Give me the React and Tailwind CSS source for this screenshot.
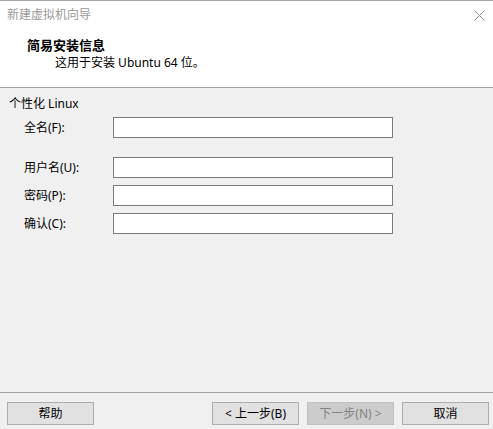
import React from "react";

const font = { fontFamily: '"Segoe UI", "Noto Sans", "Noto Sans CJK SC", sans-serif' };

const Field = ({ label, className = "" }) => (
  <div className={"flex items-center h-[21px] " + className}>
    <span className="w-[113px] pl-[24px] text-[12px] text-black">{label}</span>
    <input
      type="text"
      className="w-[280px] h-[21px] bg-white border border-[#7a7a7a] outline-none"
    />
  </div>
);

const Btn = ({ children, disabled, className = "" }) => (
  <button
    className={
      "w-[87px] h-[23px] border text-[12px] leading-none " +
      (disabled
        ? "bg-[#cccccc] border-[#bfbfbf] text-[#838383] "
        : "bg-[#e1e1e1] border-[#adadad] text-black ") +
      className
    }
  >
    {children}
  </button>
);

export default function App() {
  return (
    <div
      className="w-[493px] h-[429px] flex flex-col border-t border-[#a6a6a6] bg-[#f0f0f0] select-none"
      style={font}
    >
      {/* header */}
      <div className="h-[87px] bg-white border-b border-[#a0a0a0] flex flex-col">
        <div className="flex items-center justify-between h-[27px] pl-[7px] pr-[7px]">
          <span className="text-[12px] text-[#999999]">新建虚拟机向导</span>
          <svg width="11" height="11" viewBox="0 0 11 11" className="mr-[1px] mt-[1px]">
            <path d="M0.5 0.5 L10.5 10.5 M10.5 0.5 L0.5 10.5" stroke="#8c8c8c" strokeWidth="1" />
          </svg>
        </div>
        <div className="pl-[27px] pt-[8px] text-[13px] font-bold leading-[18px] text-black">
          简易安装信息
        </div>
        <div className="pl-[55px] text-[12px] leading-[18px] text-black">
          这用于安装 Ubuntu 64 位。
        </div>
      </div>

      {/* body */}
      <div className="flex-1 flex flex-col pt-[8px]">
        <div className="pl-[9px] text-[12px] leading-[16px] text-black">个性化 Linux</div>
        <Field label="全名(F):" className="mt-[5px]" />
        <Field label="用户名(U):" className="mt-[19px]" />
        <Field label="密码(P):" className="mt-[7px]" />
        <Field label="确认(C):" className="mt-[7px]" />
      </div>

      {/* footer */}
      <div className="h-[37px] border-t border-[#a0a0a0] flex items-start pt-[9px] pl-[7px]">
        <Btn>帮助</Btn>
        <Btn className="ml-[118px]">&lt; 上一步(B)</Btn>
        <Btn disabled className="ml-[8px]">下一步(N) &gt;</Btn>
        <Btn className="ml-[8px]">取消</Btn>
      </div>
    </div>
  );
}
